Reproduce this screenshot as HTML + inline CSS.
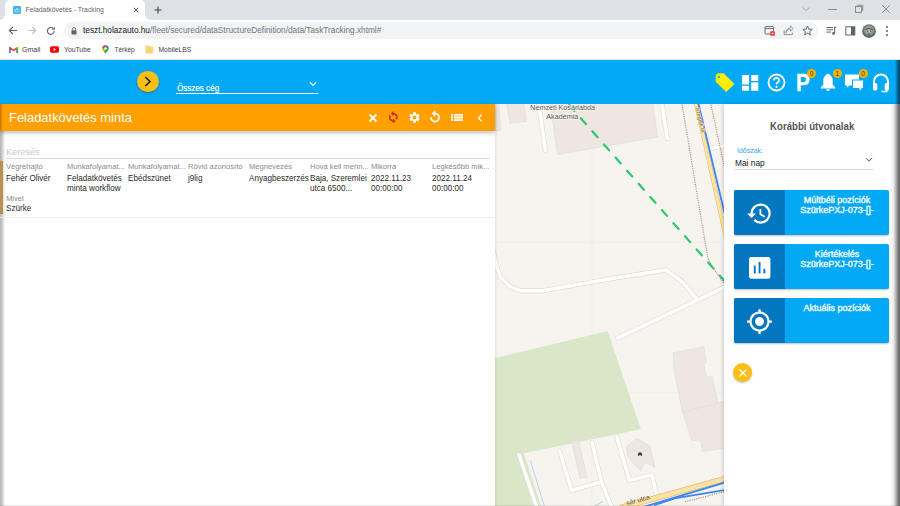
<!DOCTYPE html>
<html><head><meta charset="utf-8">
<style>
*{box-sizing:border-box;margin:0;padding:0}
html,body{width:900px;height:506px;overflow:hidden;background:#fff;font-family:"Liberation Sans",sans-serif;position:relative}
.abs{position:absolute}
#tabstrip{left:0;top:0;width:900px;height:20px;background:#dee1e6}
#tab{left:5px;top:0;width:140px;height:20px;background:#fff;border-radius:5px 5px 0 0}
#toolbar{left:0;top:20px;width:900px;height:20px;background:#fff}
#omni{left:64px;top:22px;width:754px;height:17px;background:#f1f3f4;border-radius:9px}
#bm{left:0;top:40px;width:900px;height:20px;background:#fff;border-bottom:1px solid #e6e6e6}
.ctxt{font-size:6.9px;color:#3c4043;white-space:nowrap}
#hdr{left:0;top:60px;width:900px;height:44px;background:#03a9f4}
#ph{left:0;top:104px;width:495px;height:26.8px;background:#ffa000;box-shadow:0 2px 4px rgba(0,0,0,.25);z-index:3}
#panel{left:0;top:130px;width:495px;height:376px;background:#fff}
#map{left:495px;top:104px;width:229px;height:402px;background:#f7f4f0;overflow:hidden}
#rp{left:724px;top:104px;width:176px;height:402px;background:#fff;box-shadow:-1px 0 4px rgba(0,0,0,.16)}
.lbl{font-size:8px;color:#8a8a8a;white-space:nowrap;position:absolute;transform:scaleX(.95);transform-origin:0 0}
.val{font-size:8.8px;color:#2a2a2a;white-space:nowrap;position:absolute;line-height:10px;transform:scaleX(.92);transform-origin:0 0}
.btn{position:absolute;left:9.5px;width:155px;height:45px;background:#03a9f4;border-radius:2px;box-shadow:0 1px 2px rgba(0,0,0,.25)}
.btn .ic{position:absolute;left:0;top:0;width:51.3px;height:45px;background:#0277c0;border-radius:2px 0 0 2px}
.btn .t{position:absolute;left:52px;right:0;top:5.2px;text-align:center;color:#fff;font-size:9px;line-height:10px;font-weight:400;-webkit-text-stroke:0.3px #fff}
.badge{width:9px;height:9px;border-radius:50%;background:#f0b400;color:#333;font-size:6.5px;line-height:9px;text-align:center;z-index:3}
</style></head><body>
<div id="tabstrip" class="abs"></div>
<div id="tab" class="abs"></div>
<div class="abs" style="left:145px;top:14px;width:6px;height:6px;background:#fff"></div>
<div class="abs" style="left:145px;top:14px;width:6px;height:6px;background:#dee1e6;border-bottom-left-radius:6px"></div>
<div class="abs" style="left:-1px;top:14px;width:6px;height:6px;background:#fff"></div>
<div class="abs" style="left:-1px;top:14px;width:6px;height:6px;background:#dee1e6;border-bottom-right-radius:6px"></div>
<div id="toolbar" class="abs"></div>
<div id="omni" class="abs"></div>
<div id="bm" class="abs"></div>

<!-- tab content -->
<svg class="abs" style="left:12.5px;top:6px" width="8" height="8" viewBox="0 0 8 8"><rect x="0.1" y="0.1" width="7.8" height="7.8" rx="0.9" fill="#3fb0ea"/><path d="M1.8 5.9H6.2M1.9 5.4V4.1L4 3.2 6.1 4.1V5.4M3.1 3.7L4 2.2 4.9 3.7" stroke="#cfeaf8" stroke-width="0.8" fill="none"/></svg>
<div class="abs ctxt" style="left:25.5px;top:5.8px;font-size:6.85px;color:#5f6368">Feladatkövetés - Tracking</div>
<svg class="abs" style="left:132.5px;top:6.7px" width="6" height="6" viewBox="0 0 6 6"><path d="M0.8 0.8L5.2 5.2M5.2 0.8L0.8 5.2" stroke="#555" stroke-width="1"/></svg>
<svg class="abs" style="left:154px;top:5.8px" width="8" height="8" viewBox="0 0 8 8"><path d="M4 0.5V7.5M0.5 4H7.5" stroke="#444" stroke-width="1.1"/></svg>
<!-- window controls -->
<svg class="abs" style="left:801px;top:6px" width="10" height="6" viewBox="0 0 10 6"><path d="M1.5 1.5L5 4.5 8.5 1.5" stroke="#9aa0a6" stroke-width="0.8" fill="none"/></svg>
<div class="abs" style="left:828px;top:8.5px;width:9px;height:0.8px;background:#8a8d91"></div>
<svg class="abs" style="left:854px;top:4px" width="10" height="10" viewBox="0 0 10 10"><rect x="1.5" y="2.5" width="6" height="6" stroke="#777" stroke-width="0.8" fill="none"/><path d="M3 1.3H8.7V7" stroke="#777" stroke-width="0.8" fill="none"/></svg>
<svg class="abs" style="left:881px;top:4px" width="10" height="10" viewBox="0 0 10 10"><path d="M1 1L9 9M9 1L1 9" stroke="#777" stroke-width="0.8"/></svg>
<!-- nav -->
<svg class="abs" style="left:8px;top:26px" width="10" height="9" viewBox="0 0 10 9"><path d="M9 4.5H1.5M4.8 1L1.3 4.5 4.8 8" stroke="#5f6368" stroke-width="1.1" fill="none"/></svg>
<svg class="abs" style="left:27px;top:26px" width="10" height="9" viewBox="0 0 10 9"><path d="M1 4.5H8.5M5.2 1L8.7 4.5 5.2 8" stroke="#bdc1c6" stroke-width="1.1" fill="none"/></svg>
<svg class="abs" style="left:45.5px;top:25.5px" width="10" height="10" viewBox="0 0 10 10"><path d="M8.2 5A3.4 3.4 0 1 1 7.2 2.5" stroke="#5f6368" stroke-width="1.1" fill="none"/><path d="M8.8 0.8V3.8H5.8z" fill="#5f6368"/></svg>
<svg class="abs" style="left:71px;top:27px" width="6" height="8" viewBox="0 0 6 8"><path d="M1.3 3.5V2.3A1.7 1.7 0 0 1 4.7 2.3V3.5" stroke="#5f6368" stroke-width="0.9" fill="none"/><rect x="0.5" y="3.3" width="5" height="4.2" rx="0.6" fill="#5f6368"/></svg>
<div class="abs ctxt" style="left:83px;top:26.2px;font-size:8.25px;color:#202124">teszt.holazauto.hu<span style="color:#70757a">/fleet/secured/dataStructureDefinition/data/TaskTracking.xhtml#</span></div>
<!-- right toolbar icons -->
<svg class="abs" style="left:764px;top:25px" width="12" height="12" viewBox="0 0 12 12"><rect x="1" y="1.5" width="8.5" height="7.5" rx="0.8" stroke="#5f6368" stroke-width="0.9" fill="none"/><path d="M1 3.5H9.5" stroke="#5f6368" stroke-width="0.9"/><rect x="6.3" y="6.3" width="4.5" height="4.5" rx="0.6" fill="#e53935"/><path d="M7.5 8.55H9.6M8.55 7.5V9.6" stroke="#fff" stroke-width="0.6"/></svg>
<svg class="abs" style="left:783px;top:25px" width="11" height="11" viewBox="0 0 11 11"><path d="M1.2 5.5V9.6H9.4V7.6" stroke="#80868b" stroke-width="0.9" fill="none"/><path d="M3 8C3.5 5.5 5 4.3 7.5 4.3V6.3L10.2 3.5 7.5 0.9V2.8C4.8 3 3.2 5 3 8z" stroke="#80868b" stroke-width="0.8" fill="none"/></svg>
<svg class="abs" style="left:802px;top:25px" width="11" height="11" viewBox="0 0 11 11"><path d="M5.5 1L6.8 4.2 10.2 4.4 7.6 6.6 8.4 9.9 5.5 8.1 2.6 9.9 3.4 6.6 0.8 4.4 4.2 4.2z" stroke="#5f6368" stroke-width="0.95" fill="none" stroke-linejoin="round"/></svg>
<svg class="abs" style="left:826px;top:26px" width="11" height="10" viewBox="0 0 11 10"><path d="M0.5 1.5H7M0.5 3.8H7M0.5 6.1H5" stroke="#5f6368" stroke-width="1"/><path d="M8.6 1V7.2" stroke="#5f6368" stroke-width="1"/><circle cx="7.6" cy="7.4" r="1.4" fill="#5f6368"/><path d="M8.6 1L10.5 1.6" stroke="#5f6368" stroke-width="1"/></svg>
<svg class="abs" style="left:844.5px;top:26px" width="11" height="10" viewBox="0 0 11 10"><rect x="0.8" y="0.8" width="9" height="8.2" stroke="#5f6368" stroke-width="1" fill="none"/><rect x="6" y="0.8" width="3.8" height="8.2" fill="#5f6368"/></svg>
<svg class="abs" style="left:861.5px;top:23.5px" width="14" height="14" viewBox="0 0 14 14"><defs><radialGradient id="av" cx="50%" cy="45%" r="55%"><stop offset="0" stop-color="#c9cec9"/><stop offset="0.6" stop-color="#8a918a"/><stop offset="1" stop-color="#3a403a"/></radialGradient></defs><circle cx="7" cy="7" r="6.8" fill="url(#av)"/><path d="M3.5 5.5Q7 3.5 10.5 5.5M5 7.2h1.2M8 7.2h1.2M6 10h2" stroke="#333" stroke-width="0.9" fill="none"/></svg>
<svg class="abs" style="left:885px;top:25px" width="4" height="12" viewBox="0 0 4 12"><circle cx="2" cy="2" r="1" fill="#5f6368"/><circle cx="2" cy="6" r="1" fill="#5f6368"/><circle cx="2" cy="10" r="1" fill="#5f6368"/></svg>
<!-- bookmarks -->
<svg class="abs" style="left:8.5px;top:46px" width="9" height="7" viewBox="0 0 9 7"><path d="M0.8 7V1.5L4.5 4.5 8.2 1.5V7" stroke="#ea4335" stroke-width="1.6" fill="none" stroke-linejoin="round"/><path d="M0.7 7V1.5" stroke="#4285f4" stroke-width="1.4"/><path d="M8.3 7V1.5" stroke="#34a853" stroke-width="1.4"/><path d="M7.2 2.3L8.4 1.3" stroke="#fbbc04" stroke-width="1.3"/></svg>
<div class="abs ctxt" style="left:22px;top:45.8px;font-size:7px;color:#3c4043">Gmail</div>
<svg class="abs" style="left:49.7px;top:46px" width="9" height="7" viewBox="0 0 9 7"><rect x="0" y="0.2" width="9" height="6.5" rx="1.6" fill="#f00"/><path d="M3.6 2V4.9L6.1 3.45z" fill="#fff"/></svg>
<div class="abs ctxt" style="left:64px;top:45.8px;font-size:6.8px;color:#3c4043">YouTube</div>
<svg class="abs" style="left:101.5px;top:45px" width="7" height="9" viewBox="0 0 7 9"><path d="M3.5 0.3A3.2 3.2 0 0 1 6.7 3.5C6.7 5.5 4.3 7 3.5 8.8 2.7 7 0.3 5.5 0.3 3.5A3.2 3.2 0 0 1 3.5 0.3z" fill="#34a853"/><path d="M3.5 0.3A3.2 3.2 0 0 1 6.7 3.5L3.5 3.5z" fill="#4285f4"/><path d="M0.3 3.5A3.2 3.2 0 0 1 3.5 0.3L3.5 3.5z" fill="#ea4335"/><path d="M0.3 3.5C0.3 5 1.4 6 2.2 7L3.5 3.5z" fill="#fbbc04"/><circle cx="3.5" cy="3.4" r="1.2" fill="#fff"/></svg>
<div class="abs ctxt" style="left:114.5px;top:45.8px;font-size:6.5px;color:#3c4043">Térkép</div>
<svg class="abs" style="left:145px;top:45px" width="9" height="9" viewBox="0 0 9 9"><path d="M0.5 0.6H4.5L5.5 1.6H8.2V8.6H0.5z" fill="#f5d77a"/></svg>
<div class="abs ctxt" style="left:158.5px;top:45.8px;font-size:6.75px;color:#3c4043">MobileLBS</div>
<div id="hdr" class="abs"></div>
<div id="ph" class="abs"></div>
<!-- header content -->
<div class="abs" style="left:137px;top:70.7px;width:21.5px;height:21.5px;border-radius:50%;background:#fcbf16;box-shadow:0 1px 2px rgba(0,0,0,.3);z-index:2"></div>
<svg class="abs" style="left:142px;top:76px;z-index:2" width="11" height="11" viewBox="0 0 11 11"><path d="M3.3 1L8 5.5 3.3 10" stroke="#222" stroke-width="1.6" fill="none"/></svg>
<div class="abs" style="left:176.5px;top:82.3px;font-size:9.4px;color:#fff;white-space:nowrap;z-index:2;transform:scaleX(.86);transform-origin:0 0;-webkit-text-stroke:0.15px #fff">Összes cég</div>
<div class="abs" style="left:176px;top:92.5px;width:142px;height:1.4px;background:#fff;z-index:2"></div>
<svg class="abs" style="left:308.5px;top:81px;z-index:2" width="8" height="6" viewBox="0 0 8 6"><path d="M1 1.3L4 4.3 7 1.3" stroke="#fff" stroke-width="1.2" fill="none"/></svg>
<!-- right header icons -->
<svg class="abs" style="left:714px;top:73px;z-index:2" width="22" height="21" viewBox="0 0 22 21"><path d="M2 3.3V8.8L12.3 18.8 20.2 10.9 9.6 0.6H4.7A2.7 2.7 0 0 0 2 3.3z" fill="#ffee00" stroke="#ffee00" stroke-width="0.5" stroke-linejoin="round"/><circle cx="5" cy="4.1" r="1.15" fill="#03a9f4"/></svg>
<svg class="abs" style="left:742.4px;top:74.7px;z-index:2" width="17" height="16" viewBox="0 0 17 16"><rect x="0" y="0" width="7.1" height="9.5" fill="#fff"/><rect x="9.2" y="0" width="7.1" height="6" fill="#fff"/><rect x="0" y="10.8" width="7.1" height="4.9" fill="#fff"/><rect x="9.2" y="7.3" width="7.1" height="8.4" fill="#fff"/></svg>
<svg class="abs" style="left:767px;top:73px;z-index:2" width="19" height="19" viewBox="0 0 19 19"><circle cx="9.5" cy="9.5" r="8" stroke="#fff" stroke-width="1.8" fill="none"/><path d="M7 7.4A2.5 2.5 0 1 1 10.5 9.6C9.8 10 9.5 10.5 9.5 11.5" stroke="#fff" stroke-width="1.7" fill="none"/><circle cx="9.5" cy="13.8" r="1.1" fill="#fff"/></svg>
<div class="abs" style="left:795.5px;top:71.6px;font-size:23.8px;font-weight:700;color:#fff;z-index:2;line-height:22px;transform:scaleX(.87);transform-origin:0 0;-webkit-text-stroke:0.4px #fff">P</div>
<svg class="abs" style="left:820px;top:73px;z-index:2" width="16" height="19" viewBox="0 0 16 19"><path d="M8 0.8C6.8 0.8 5.9 1.6 5.6 2.6 4 3.6 3.3 5.3 3.3 7.5V11.6L0.8 14.4V15.4H15.2V14.4L12.7 11.6V7.5C12.7 5.3 12 3.6 10.4 2.6 10.1 1.6 9.2 0.8 8 0.8z" fill="#fff"/><path d="M6.2 16.3A1.8 1.8 0 0 0 9.8 16.3z" fill="#fff"/></svg>
<svg class="abs" style="left:844px;top:73.5px;z-index:2" width="20" height="18" viewBox="0 0 20 18"><path d="M1 0.5H15V5.5H8V11.5H5L3.5 13.8 3 11.5H1z" fill="#fff"/><path d="M9 6.5H19V14H17.8L16.3 16.5 15 14H9z" fill="#fff"/></svg>
<svg class="abs" style="left:872px;top:72.5px;z-index:2" width="18" height="20" viewBox="0 0 18 20"><path d="M2 12V8.5A7 7 0 0 1 16 8.5V12" stroke="#fff" stroke-width="2" fill="none"/><rect x="1" y="10" width="4.3" height="7.5" rx="1.5" fill="#fff"/><rect x="12.7" y="10" width="4.3" height="7.5" rx="1.5" fill="#fff"/><path d="M14.8 17V18.5H9.5" stroke="#fff" stroke-width="1.3" fill="none"/></svg>
<div class="abs badge" style="left:807px;top:69px">0</div>
<div class="abs badge" style="left:832.8px;top:69px">1</div>
<div class="abs badge" style="left:858.5px;top:69px">0</div>

<div id="panel" class="abs"></div>

<!-- orange header content -->
<div class="abs" style="left:0;top:104px;width:3px;height:26.8px;background:linear-gradient(90deg,rgba(120,70,0,.45),rgba(120,70,0,0));z-index:4"></div>
<div class="abs" style="left:9px;top:110.1px;font-size:12.95px;color:#fff;white-space:nowrap;z-index:4;line-height:15px">Feladatkövetés minta</div>
<svg class="abs" style="left:367.5px;top:112.5px;z-index:4" width="10" height="10" viewBox="0 0 10 10"><path d="M1.5 1.5L8.5 8.5M8.5 1.5L1.5 8.5" stroke="#fff" stroke-width="1.8"/></svg>
<svg class="abs" style="left:386.7px;top:111.2px;z-index:4" width="12.5" height="12.5" viewBox="0 0 24 24"><path d="M12 4V1L8 5l4 4V6c3.31 0 6 2.69 6 6 0 1.01-.25 1.97-.7 2.8l1.46 1.46C19.54 15.03 20 13.57 20 12c0-4.42-3.58-8-8-8zm0 14c-3.31 0-6-2.69-6-6 0-1.01.25-1.97.7-2.8L5.24 7.74C4.46 8.97 4 10.43 4 12c0 4.42 3.58 8 8 8v3l4-4-4-4v3z" fill="#c62828" stroke="#c62828" stroke-width="1"/></svg>
<svg class="abs" style="left:407.5px;top:110.5px;z-index:4" width="13" height="13" viewBox="0 0 24 24"><path d="M19.14 12.94c.04-.3.06-.61.06-.94 0-.32-.02-.64-.07-.94l2.03-1.58c.18-.14.23-.41.12-.61l-1.92-3.32c-.12-.22-.37-.29-.59-.22l-2.39.96c-.5-.38-1.03-.7-1.62-.94l-.36-2.54c-.04-.24-.24-.41-.48-.41h-3.84c-.24 0-.43.17-.47.41l-.36 2.54c-.59.24-1.13.57-1.62.94l-2.39-.96c-.22-.08-.47 0-.59.22L2.74 8.87c-.12.21-.08.47.12.61l2.03 1.58c-.05.3-.09.63-.09.94s.02.64.07.94l-2.03 1.58c-.18.14-.23.41-.12.61l1.92 3.32c.12.22.37.29.59.22l2.39-.96c.5.38 1.03.7 1.62.94l.36 2.54c.05.24.24.41.48.41h3.84c.24 0 .44-.17.47-.41l.36-2.54c.59-.24 1.13-.56 1.62-.94l2.39.96c.22.08.47 0 .59-.22l1.92-3.32c.12-.22.07-.47-.12-.61l-2.01-1.58zM12 15.6c-1.98 0-3.6-1.62-3.6-3.6s1.62-3.6 3.6-3.6 3.6 1.62 3.6 3.6-1.62 3.6-3.6 3.6z" fill="#fff"/></svg>
<svg class="abs" style="left:428px;top:109.5px;z-index:4" width="14" height="14" viewBox="0 0 24 24"><path d="M12 5V1L7 6l5 5V7c3.31 0 6 2.69 6 6s-2.69 6-6 6-6-2.69-6-6H4c0 4.42 3.58 8 8 8s8-3.58 8-8-3.58-8-8-8z" fill="#fff" stroke="#fff" stroke-width="1"/></svg>
<svg class="abs" style="left:451px;top:114px;z-index:4" width="12" height="8" viewBox="0 0 12 8"><path d="M0 0h2v1.8H0zM2.8 0H12v1.8H2.8zM0 2.6h2v1.8H0zM2.8 2.6H12v1.8H2.8zM0 5.2h2v1.8H0zM2.8 5.2H12v1.8H2.8z" fill="#fff"/></svg>
<svg class="abs" style="left:477px;top:114px;z-index:4" width="6" height="8" viewBox="0 0 6 8"><path d="M4.5 0.8L1.6 4 4.5 7.2" stroke="#fff" stroke-width="1.3" fill="none"/></svg>
<!-- panel content -->
<div class="abs" style="left:0;top:130px;width:5px;height:376px;background:linear-gradient(90deg,rgba(0,0,0,.3),rgba(0,0,0,.2) 45%,rgba(0,0,0,0))"></div>
<div class="abs" style="left:6px;top:145.9px;font-size:9.8px;color:#c8c8c8;white-space:nowrap;transform:scaleX(.93);transform-origin:0 0">Keresés</div>
<div class="abs" style="left:6px;top:157.8px;width:483.5px;height:1px;background:#dcdcdc"></div>
<div class="abs" style="left:0;top:161px;width:3px;height:53px;background:#b8924e"></div>
<div class="lbl" style="left:6px;top:162px">Végrehajtó</div>
<div class="lbl" style="left:67px;top:162px">Munkafolyamat...</div>
<div class="lbl" style="left:128px;top:162px">Munkafolyamat...</div>
<div class="lbl" style="left:188px;top:162px">Rövid azonosító</div>
<div class="lbl" style="left:249.2px;top:162px">Megnevezés</div>
<div class="lbl" style="left:310px;top:162px">Hová kell menn...</div>
<div class="lbl" style="left:371px;top:162px">Mikorra</div>
<div class="lbl" style="left:431.5px;top:162px">Legkésőbb mik...</div>
<div class="val" style="left:6px;top:172.9px">Fehér Olivér</div>
<div class="val" style="left:67px;top:172.9px">Feladatkövetés<br>minta workflow</div>
<div class="val" style="left:128px;top:172.9px">Ebédszünet</div>
<div class="val" style="left:188px;top:172.9px">j9lig</div>
<div class="val" style="left:249.2px;top:172.9px">Anyagbeszerzés</div>
<div class="val" style="left:310px;top:172.9px">Baja, Szeremlei<br>utca 6500...</div>
<div class="val" style="left:371px;top:172.9px">2022.11.23<br>00:00:00</div>
<div class="val" style="left:431.5px;top:172.9px">2022.11.24<br>00:00:00</div>
<div class="lbl" style="left:6px;top:193.6px">Mivel</div>
<div class="val" style="left:6px;top:202.6px">Szürke</div>
<div class="abs" style="left:0;top:216.8px;width:495px;height:1px;background:#ececec"></div>
<div id="map" class="abs"><svg width="229" height="402" viewBox="495 104 229 402" style="position:absolute;left:0;top:0">
<rect x="495" y="104" width="229" height="402" fill="#f7f4f0"/>
<path d="M592 104V506M495 242.4H724M495 392.6H724" stroke="#efebe5" stroke-width="0.6"/>
<!-- park -->
<path d="M495 358.2L607.6 330.9 640.9 429.3 523.7 453.2 541 506H495z" fill="#d9e6c7"/>
<!-- buildings -->
<g fill="#eee7e1" stroke="#e4dcd4" stroke-width="0.7">
<path d="M495 100H498.5L500.9 130.2 495 130.8z"/>
<path d="M506.2 100H523.4L526.4 121.4 509.8 123.1z"/>
<path d="M549.5 100L557.6 154.5 657.4 137 652.4 100z"/>
<path d="M673 353L703.9 346.6 706.2 362.5 703.9 363.7 706.2 376.8 712.2 376.8 718.1 402.8 726 401V448L702.7 451.5 700.3 439.6 692 440.8 682.5 412 674.2 370.8z"/>
<path d="M682.5 412L726 401.5" fill="none"/>
<path d="M571.6 441.2L578.5 440 587 477 580 478.3z"/>
<path d="M626.5 446.5L637 438.3 649.8 445.8 655 467.5 644.5 462.3 640.8 471.3 627.3 456.3z"/>
</g>
<path d="M508.5 104.5L523.8 121 510.5 121.8z" fill="none"/>
<!-- white roads -->
<g fill="none" stroke-linecap="round" stroke-linejoin="round">
<g stroke="#e0dbd5" stroke-width="4.9">
<path d="M538.3 100L545.4 150.4"/>
<path d="M661.3 100L667.3 138.5"/>
<path d="M710.3 148.6L726 145.5"/>
<path d="M493 250L497 268 501 278 510.8 286.9 520.7 290.8 542.4 290.8 615 278 665.8 270 681.6 281.1 695.8 298"/>
<path d="M617.8 338L726 286.5"/>
<path d="M519 455L537 508"/>
<path d="M559.6 450.8L571.6 490.3 601.5 481.9 591.9 442.4M601.5 481.9L612 508"/>
<path d="M616.8 436.8L629.5 480.3 652 475 656.5 494.6"/>
</g>
<g stroke="#ffffff" stroke-width="3.6">
<path d="M538.3 100L545.4 150.4"/>
<path d="M661.3 100L667.3 138.5"/>
<path d="M710.3 148.6L726 145.5"/>
<path d="M493 250L497 268 501 278 510.8 286.9 520.7 290.8 542.4 290.8 615 278 665.8 270 681.6 281.1 695.8 298"/>
<path d="M617.8 338L726 286.5"/>
<path d="M519 455L537 508"/>
<path d="M559.6 450.8L571.6 490.3 601.5 481.9 591.9 442.4M601.5 481.9L612 508"/>
<path d="M616.8 436.8L629.5 480.3 652 475 656.5 494.6"/>
</g>
</g>
<!-- streams -->
<path d="M530.4 460.4L544.5 507M593 507L603 501.5" stroke="#a8c8e8" stroke-width="0.8" fill="none"/>
<!-- railways dotted -->
<g fill="none" stroke="#a48e78" stroke-width="1.1" stroke-dasharray="1.2 1.1">
<path d="M681.3 100L701.4 220 707.8 258 712 266 723.5 282.7"/>
<path d="M710 100L722.8 160 726 176"/>
<path d="M685 501.8L726 491.3"/>
</g>
<!-- main yellow roads -->
<g fill="none" stroke-linecap="butt">
<path d="M695.3 100L727.5 244" stroke="#eabb78" stroke-width="4.2"/>
<path d="M695.3 100L727.5 244" stroke="#fce4a4" stroke-width="3"/>
<path d="M622 508L726 475.5 726 481.5" stroke="none"/>
<path d="M620 508L726 478.6" stroke="#e8b870" stroke-width="6"/>
<path d="M620 508L726 478.6" stroke="#fbe3a6" stroke-width="4.6"/>
</g>
<!-- route lines blue -->
<g fill="none" stroke="#3a86f4" stroke-width="1.8" stroke-linecap="round">
<path d="M697.6 100L724.5 213"/>
<path d="M640 508L726 482.2"/>
<path d="M655 505L674.6 498.3 726 489.8"/>
</g>
<!-- green dashed -->
<path d="M569.2 105.1L724.5 281" stroke="#2bc96e" stroke-width="2.2" fill="none" stroke-dasharray="7.8 9.7" stroke-linecap="round"/>
<!-- labels -->
<g font-family="Liberation Sans, sans-serif" font-size="7.2" fill="#5a5a5a" text-anchor="middle" stroke="#f7f4f0" stroke-width="1.5" paint-order="stroke">
<text x="562.6" y="110.2">Nemzeti Kosárlabda</text>
<text x="562.3" y="118.5">Akadémia</text>
</g>
<text x="0" y="0" font-family="Liberation Sans, sans-serif" font-size="5.4" fill="#6a6250" stroke="#fce4a4" stroke-width="0.8" paint-order="stroke" transform="translate(695.6 108) rotate(76)">Szegedi út</text>
<text x="0" y="0" font-family="Liberation Sans, sans-serif" font-size="6.8" fill="#5e5646" transform="translate(627 505.5) rotate(-16)">sár utca</text>
<!-- parking icon -->
<g transform="translate(640 454)"><circle cx="-1.2" cy="0.8" r="1" fill="#333"/><circle cx="1.2" cy="0.8" r="1" fill="#333"/><path d="M-2 0.3L-1.3-1.5H1.3L2 0.3z" fill="#333"/></g>
<!-- shadows -->
<rect x="495" y="104" width="3" height="402" fill="url(#lsh)"/>

<defs>
<linearGradient id="lsh" x1="0" x2="1"><stop offset="0" stop-color="#000" stop-opacity=".07"/><stop offset="1" stop-color="#000" stop-opacity="0"/></linearGradient>
<linearGradient id="rsh" x1="0" x2="1"><stop offset="0" stop-color="#000" stop-opacity="0"/><stop offset="1" stop-color="#000" stop-opacity=".13"/></linearGradient>
</defs>
</svg></div>
<div id="rp" class="abs"></div>

<!-- right panel content -->
<div class="abs" style="left:770px;top:120.5px;font-size:10.4px;font-weight:700;color:#555;white-space:nowrap;z-index:5;transform:scaleX(.93);transform-origin:0 0">Korábbi útvonalak</div>
<div class="abs" style="left:737px;top:146.3px;font-size:7.5px;color:#42a5f5;white-space:nowrap;z-index:5;transform:scaleX(.93);transform-origin:0 0">Időszak:</div>
<div class="abs" style="left:735px;top:158.3px;font-size:9.1px;color:#222;white-space:nowrap;z-index:5;transform:scaleX(.92);transform-origin:0 0">Mai nap</div>
<svg class="abs" style="left:865px;top:157px;z-index:5" width="8" height="6" viewBox="0 0 8 6"><path d="M1 1.2L4 4.2 7 1.2" stroke="#555" stroke-width="1" fill="none"/></svg>
<div class="abs" style="left:734px;top:168.6px;width:140px;height:1px;background:#d8d8d8;z-index:5"></div>
<div class="abs btn" style="left:733.5px;top:190px;z-index:5"><div class="ic"></div><div class="t">Múltbéli pozíciók<br>SzürkePXJ-073-[]-</div>
<svg style="position:absolute;left:12px;top:10px" width="27" height="27" viewBox="0 0 24 24"><path d="M13 3a9 9 0 0 0-9 9H1l3.89 3.89.07.14L9 12H6c0-3.87 3.13-7 7-7s7 3.13 7 7-3.13 7-7 7c-1.93 0-3.68-.79-4.94-2.06l-1.42 1.42A8.954 8.954 0 0 0 13 21a9 9 0 0 0 0-18zm-1 5v5l4.28 2.54.72-1.21-3.5-2.08V8H12z" fill="#fff"/></svg></div>
<div class="abs btn" style="left:733.5px;top:244px;z-index:5"><div class="ic"></div><div class="t">Kiértékelés<br>SzürkePXJ-073-[]-</div>
<svg style="position:absolute;left:15.4px;top:13.2px" width="22" height="22" viewBox="0 0 22 22"><rect x="0" y="0" width="21.4" height="21.8" rx="2.3" fill="#fff"/><rect x="4.8" y="8.6" width="1.9" height="7.8" fill="#0277c0"/><rect x="9.6" y="5" width="1.9" height="11.4" fill="#0277c0"/><rect x="14.4" y="11.8" width="1.9" height="4.6" fill="#0277c0"/></svg></div>
<div class="abs btn" style="left:733.5px;top:298px;z-index:5"><div class="ic"></div><div class="t">Aktuális pozíciók</div>
<svg style="position:absolute;left:12px;top:9.5px" width="27" height="27" viewBox="0 0 24 24"><path d="M12 8c-2.21 0-4 1.79-4 4s1.79 4 4 4 4-1.79 4-4-1.79-4-4-4zm8.94 3A8.994 8.994 0 0 0 13 3.06V1h-2v2.06A8.994 8.994 0 0 0 3.06 11H1v2h2.06A8.994 8.994 0 0 0 11 20.94V23h2v-2.06A8.994 8.994 0 0 0 20.94 13H23v-2h-2.06zM12 19c-3.87 0-7-3.13-7-7s3.13-7 7-7 7 3.13 7 7-3.13 7-7 7z" fill="#fff"/></svg></div>
<div class="abs" style="left:733.3px;top:363px;width:19.2px;height:19.2px;border-radius:50%;background:#fcbf16;box-shadow:0 1px 2px rgba(0,0,0,.25);z-index:5"></div>
<svg class="abs" style="left:737.9px;top:367.5px;z-index:5" width="10" height="10" viewBox="0 0 10 10"><path d="M1.5 1.5L8.5 8.5M8.5 1.5L1.5 8.5" stroke="#fff" stroke-width="1.3"/></svg>
<!-- screen edge shadows -->
<div class="abs" style="left:890px;top:104px;width:10px;height:402px;background:linear-gradient(90deg,rgba(0,0,0,0) 0%,rgba(0,0,0,.08) 35%,rgba(0,0,0,.3) 60%,rgba(0,0,0,.52) 82%,rgba(0,0,0,.6) 100%);z-index:8"></div>
<div class="abs" style="left:895px;top:60px;width:5px;height:44px;background:linear-gradient(90deg,rgba(0,0,0,0),rgba(0,0,0,.45) 60%,rgba(0,0,0,.6));z-index:8"></div>
<div class="abs" style="left:0;top:504.8px;width:900px;height:1.2px;background:rgba(0,0,0,.09);z-index:8"></div>
</body></html>
